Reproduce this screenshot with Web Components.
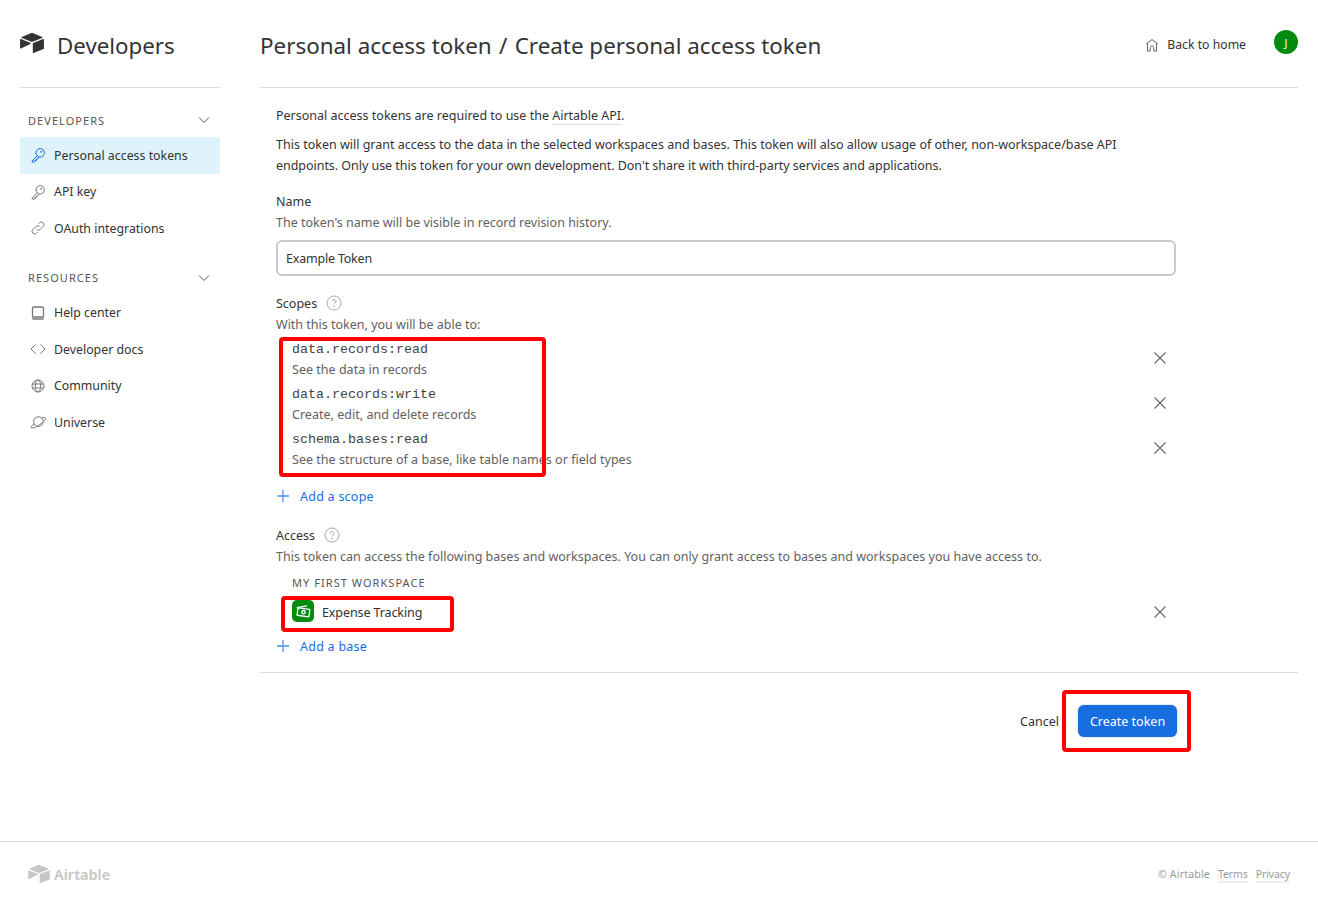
<!DOCTYPE html>
<html lang="en">
<head>
<meta charset="utf-8">
<title>Create personal access token</title>
<style>
  html, body { margin: 0; padding: 0; background: #fff; }
  body { font-family: "Noto Sans", "Open Sans", sans-serif; font-size: 12.5px; color: #333; }
</style>
</head>
<body>
<dev-page>
  <dev-sidebar slot="sidebar"></dev-sidebar>
  <page-header slot="header"></page-header>
  <token-form slot="main"></token-form>
  <site-footer slot="footer"></site-footer>
</dev-page>

<script>
const ICONS = {
  logo: `<path d="M90 12.400 24 39.700c-3.700 1.500-3.600 6.700.1 8.200l66.200 26.200a24.600 24.600 0 0 0 18.100 0l66.300-26.200c3.700-1.500 3.700-6.700.1-8.200L108.800 12.400a24.600 24.600 0 0 0-18.800 0"/><path d="M105.300 88.500v65.600c0 3.100 3.100 5.300 6 4.100l73.900-28.600a4.400 4.400 0 0 0 2.800-4.100V59.800c0-3.100-3.200-5.300-6.100-4.100l-73.800 28.600a4.400 4.400 0 0 0-2.800 4.200"/><path d="m88.100 91.800-21.900 10.600-2.300 1.100-46.200 22.200c-2.900 1.400-6.700-.7-6.700-4V60.100c0-1.200.6-2.200 1.400-3a5 5 0 0 1 1.100-.8c1.100-.7 2.700-.9 4-.3l69.200 27.800c3.600 1.400 3.900 6.400.4 8"/>`,
  key: `<circle cx="10.200" cy="5.800" r="4.200"/><path d="M7.300 8.800 2 14v1h2.800v-1.500h1.500V12h1.500l1-1.800"/><circle cx="11.200" cy="4.800" r=".6"/>`,
  link: `<path d="M6.600 9.400a2.500 2.500 0 0 0 3.600 0l3-3a2.500 2.500 0 0 0-3.600-3.600l-1 1"/><path d="M9.400 6.600a2.500 2.500 0 0 0-3.600 0l-3 3a2.500 2.500 0 0 0 3.600 3.600l1-1"/>`,
  book: `<rect x="2.500" y="2" width="11" height="12" rx="1.200" stroke-width="1.300"/><path d="M2.500 11.500h11v2.500h-11z" fill="#999" stroke="#999"/>`,
  code: `<path d="M5.500 3.500 1 8l4.500 4.500M10.500 3.500 15 8l-4.500 4.500"/>`,
  globe: `<circle cx="8" cy="8" r="6"/><ellipse cx="8" cy="8" rx="2.700" ry="6"/><path d="M2.400 6h11.200M2.400 10h11.200"/>`,
  planet: `<circle cx="8.400" cy="7.600" r="4.800"/><path d="M4.600 9.800C2.500 11.300.6 12.800 1 13.700c.6 1 4.800-.3 8.700-3 3.900-2.700 6.300-5.700 5.700-6.800-.4-.6-1.900-.5-3.500 0"/>`,
  home: `<path d="M2 7.200 8 2.500l6 4.700M3.500 6.500v7.500h2.700v-3.300a1.800 1.800 0 0 1 3.600 0V14h2.700V6.500" stroke-linejoin="round"/>`,
  chevron: `<path d="M3 5.500 8 10.500 13 5.500"/>`,
  help: `<circle cx="8" cy="8" r="7"/><path d="M6.200 6.300a1.900 1.900 0 1 1 2.800 1.700c-.7.400-1 .8-1 1.500"/><circle cx="8" cy="11.500" r=".4"/>`,
  plus: `<path d="M8 2v12M2 8h12"/>`,
  close: `<path d="M2.500 2.500 13.500 13.500M13.500 2.500 2.500 13.500"/>`
};

function icon(name, size, color, sw) {
  return `<svg width="${size}" height="${size}" viewBox="0 0 16 16" fill="none" stroke="${color}" stroke-width="${sw || 1}" aria-hidden="true">${ICONS[name]}</svg>`;
}

class DevPage extends HTMLElement {
  constructor() {
    super();
    this.attachShadow({ mode: "open" });
    this.shadowRoot.innerHTML = `
      <style>
        :host { display: flex; flex-direction: column; min-height: 908px; position: relative; }
        .top { display: flex; gap: 40px; padding: 0 20px; flex: 1; }
        .side { width: 200px; flex: none; }
        .content { flex: 1; min-width: 0; }
      </style>
      <div class="top">
        <div class="side"><slot name="sidebar"></slot></div>
        <div class="content">
          <slot name="header"></slot>
          <slot name="main"></slot>
        </div>
      </div>
      <slot name="footer"></slot>
    `;
  }
}

class NavItem extends HTMLElement {
  constructor() {
    super();
    this.attachShadow({ mode: "open" });
    const active = this.hasAttribute("active");
    const name = this.getAttribute("icon");
    this.shadowRoot.innerHTML = `
      <style>
        :host { display: flex; align-items: center; height: 36.500px; border-radius: 3px; padding-left: 10px; gap: 8px; white-space: nowrap; color: #333; font-size: 12.350px; }
        :host([active]) { background: #def3fc; }
        .i { width: 16px; height: 16px; display: flex; }
      </style>
      <span class="i">${icon(name, 16, active ? "#166ee1" : "#777")}</span>
      <span><slot></slot></span>
    `;
  }
}

class NavGroup extends HTMLElement {
  constructor() {
    super();
    this.attachShadow({ mode: "open" });
    this.shadowRoot.innerHTML = `
      <style>
        :host { display: block; }
        .head { display: flex; align-items: center; justify-content: space-between; box-sizing: border-box; height: 32px; padding: 0 8px 2px; font-size: 11px; letter-spacing: 1.050px; color: #555; }
        svg { display: block; }
      </style>
      <div class="head"><span>${this.getAttribute("label")}</span>${icon("chevron", 16, "#555")}</div>
      <slot></slot>
    `;
  }
}

class DevSidebar extends HTMLElement {
  constructor() {
    super();
    this.attachShadow({ mode: "open" });
    this.shadowRoot.innerHTML = `
      <style>
        :host { display: block; }
        .brand { display: flex; align-items: center; height: 85px; padding-top: 2px; border-bottom: 1px solid #dcdcdc; gap: 13px; font-size: 22.300px; color: #333; }
        .brand span { margin-top: 2px; }
        svg.logo { fill: #333; display: block; margin-top: -3px; }
        .groups { padding-top: 17px; display: flex; flex-direction: column; gap: 16px; }
      </style>
      <div class="brand">
        <svg class="logo" width="24" height="20" viewBox="11 11 177 148" aria-hidden="true">${ICONS.logo}</svg>
        <span>Developers</span>
      </div>
      <div class="groups">
        <nav-group label="DEVELOPERS">
          <nav-item icon="key" active>Personal access tokens</nav-item>
          <nav-item icon="key">API key</nav-item>
          <nav-item icon="link">OAuth integrations</nav-item>
        </nav-group>
        <nav-group label="RESOURCES">
          <nav-item icon="book">Help center</nav-item>
          <nav-item icon="code">Developer docs</nav-item>
          <nav-item icon="globe">Community</nav-item>
          <nav-item icon="planet">Universe</nav-item>
        </nav-group>
      </div>
    `;
  }
}

class PageHeader extends HTMLElement {
  constructor() {
    super();
    this.attachShadow({ mode: "open" });
    this.shadowRoot.innerHTML = `
      <style>
        :host { display: flex; align-items: center; height: 85px; padding-top: 2px; border-bottom: 1px solid #dcdcdc; }
        h1 { flex: 1; margin: 2px 0 0; font-size: 22.400px; font-weight: 400; color: #333; }
        h1 span { padding: 0 1.500px; }
        .back { display: flex; align-items: center; gap: 7.500px; margin-right: 28px; color: #333; font-size: 12.250px; }
        .avatar { width: 24px; height: 24px; border-radius: 50%; background: #048a0e; color: #fff; font-size: 11px; display: flex; align-items: center; justify-content: center; margin-top: -5px; }
        svg { display: block; }
      </style>
      <h1>Personal access token <span>/</span> Create personal access token</h1>
      <span class="back">${icon("home", 16, "#666")}<span>Back to home</span></span>
      <span class="avatar">J</span>
    `;
  }
}

class ScopeRow extends HTMLElement {
  constructor() {
    super();
    this.attachShadow({ mode: "open" });
    this.shadowRoot.innerHTML = `
      <style>
        :host { display: flex; align-items: center; justify-content: space-between; height: 45px; padding-left: 16px; padding-right: 8px; }
        .t { align-self: flex-start; padding-top: 4px; }
        code { display: block; font-family: "Liberation Mono", monospace; font-size: 13.330px; line-height: 20px; color: #444; }
        .desc { display: block; line-height: 20px; color: #616161; letter-spacing: .02px; }
        svg { display: block; margin-top: -1px; }
      </style>
      <div class="t"><code>${this.getAttribute("name")}</code><span class="desc"><slot></slot></span></div>
      ${icon("close", 16, "#666", 1.100)}
    `;
  }
}

class AddLink extends HTMLElement {
  constructor() {
    super();
    this.attachShadow({ mode: "open" });
    this.shadowRoot.innerHTML = `
      <style>
        :host { display: flex; align-items: center; gap: 9px; color: #166ee1; height: 20px; letter-spacing: .25px; }
        svg { display: block; margin-left: -1px; }
      </style>
      ${icon("plus", 16, "#4f92e8", 1.300)}<span><slot></slot></span>
    `;
  }
}

class HighlightBox extends HTMLElement {
  constructor() {
    super();
    this.attachShadow({ mode: "open" });
    this.shadowRoot.innerHTML = `
      <style>
        :host { display: block; position: absolute; box-sizing: border-box; border: 4px solid #fe0000; border-radius: 4px; pointer-events: none; }
      </style>
    `;
  }
}

class TokenForm extends HTMLElement {
  constructor() {
    super();
    this.attachShadow({ mode: "open" });
    this.shadowRoot.innerHTML = `
      <style>
        :host { display: block; position: relative; }
        .body { padding: 17px 16px 16px; border-bottom: 1px solid #dcdcdc; }
        p { margin: 0; line-height: 21px; color: #333; }
        .intro2 { margin-top: 8px; width: 880px; }
        .tight { letter-spacing: -.04px; }
        a.u { color: inherit; text-decoration: none; border-bottom: 1px solid #dcdcdc; }
        .label { display: flex; align-items: center; gap: 9px; line-height: 20px; color: #333; }
        .label svg { margin-top: -2px; }
        .hint { line-height: 20px; color: #616161; margin-top: 1px; }
        .name { margin-top: 16px; }
        .input { box-sizing: border-box; width: 900px; height: 36px; margin-top: 7px; border: 2px solid #c9c9c9; border-radius: 6px; padding: 0 8px; display: flex; align-items: center; color: #333; letter-spacing: -.2px; }
        .scopes { margin-top: 18px; }
        .list { margin-top: 1px; width: 900px; }
        .add { margin-top: 15px; }
        .access { margin-top: 20px; }
        .wide { letter-spacing: .015px; }
        .ws { margin: 6px 0 1px 16px; font-size: 11px; letter-spacing: 1.050px; color: #555; line-height: 20px; }
        .base { display: flex; align-items: center; justify-content: space-between; width: 900px; box-sizing: border-box; height: 36px; padding: 0 8px 0 16px; }
        .base .l { display: flex; align-items: center; gap: 8px; letter-spacing: -.1px; }
        .base > svg { margin-top: -1px; }
        .app { width: 22px; height: 22px; border-radius: 5px; background: #048a0e; display: flex; align-items: center; justify-content: center; margin-top: -2px; }
        .addbase { margin-top: 6px; }
        .foot { display: flex; align-items: center; justify-content: flex-end; gap: 19px; height: 96px; padding-right: 121px; }
        .btn { height: 32px; width: 99px; border-radius: 6px; background: #166ee1; color: #fff; display: flex; align-items: center; justify-content: center; box-shadow: 0 0 2px rgba(0,0,0,.3); }
        svg { display: block; }
        highlight-box.a { left: 19px; top: 249px; width: 267px; height: 140px; }
        highlight-box.b { left: 21px; top: 508px; width: 173px; height: 36px; }
        highlight-box.c { left: 802px; top: 602px; width: 129px; height: 62px; }
      </style>
      <div class="body">
        <p>Personal access tokens are required to use the <a class="u">Airtable API</a>.</p>
        <p class="intro2">This token will grant access to the data in the selected workspaces and bases. This token will also allow usage of other, non-workspace/base API <span class="tight">endpoints. Only use this token for your own development. Don't share it with third-party services and applications.</span></p>

        <div class="name label">Name</div>
        <div class="hint">The token's name will be visible in record revision history.</div>
        <div class="input">Example Token</div>

        <div class="scopes label">Scopes ${icon("help", 16, "#a6a6a6")}</div>
        <div class="hint">With this token, you will be able to:</div>
        <div class="list">
          <scope-row name="data.records:read">See the data in records</scope-row>
          <scope-row name="data.records:write">Create, edit, and delete records</scope-row>
          <scope-row name="schema.bases:read">See the structure of a base, like table names or field types</scope-row>
        </div>
        <add-link class="add">Add a scope</add-link>

        <div class="access label">Access ${icon("help", 16, "#a6a6a6")}</div>
        <div class="hint wide">This token can access the following bases and workspaces. You can only grant access to bases and workspaces you have access to.</div>
        <div class="ws">MY FIRST WORKSPACE</div>
        <div class="base">
          <span class="l">
            <span class="app"><svg width="18" height="18" viewBox="0 0 18 18" fill="none" stroke="#fff" stroke-width="1.300"><rect x="3.500" y="6.500" width="12" height="7.500" rx=".5" transform="rotate(8 9 10)"/><path d="M2.800 5.600 13 3.800"/><circle cx="9.500" cy="10.200" r="1.700"/></svg></span>
            <span>Expense Tracking</span>
          </span>
          ${icon("close", 16, "#666", 1.100)}
        </div>
        <add-link class="addbase">Add a base</add-link>
      </div>
      <div class="foot">
        <span>Cancel</span>
        <span class="btn">Create token</span>
      </div>
      <highlight-box class="a"></highlight-box>
      <highlight-box class="b"></highlight-box>
      <highlight-box class="c"></highlight-box>
    `;
  }
}

class SiteFooter extends HTMLElement {
  constructor() {
    super();
    this.attachShadow({ mode: "open" });
    this.shadowRoot.innerHTML = `
      <style>
        :host { display: flex; align-items: center; justify-content: space-between; height: 66px; border-top: 1px solid #dcdcdc; padding: 0 28px; color: #999; font-size: 10.500px; }
        .brand { display: flex; align-items: center; gap: 4px; font-size: 14.500px; font-weight: 600; color: #c6c6c6; margin-top: -2px; }
        .brand svg { fill: #c6c6c6; display: block; }
        .links { display: flex; gap: 8px; }
        .links span { letter-spacing: .2px; }
        .links a { border-bottom: 2px solid #eee; letter-spacing: -.1px; }
      </style>
      <span class="brand"><svg width="22" height="18" viewBox="11 11 177 148" aria-hidden="true">${ICONS.logo}</svg><span>Airtable</span></span>
      <span class="links"><span>© Airtable</span><a>Terms</a><a>Privacy</a></span>
    `;
  }
}

customElements.define("highlight-box", HighlightBox);
customElements.define("nav-item", NavItem);
customElements.define("nav-group", NavGroup);
customElements.define("dev-sidebar", DevSidebar);
customElements.define("page-header", PageHeader);
customElements.define("scope-row", ScopeRow);
customElements.define("add-link", AddLink);
customElements.define("token-form", TokenForm);
customElements.define("site-footer", SiteFooter);
customElements.define("dev-page", DevPage);
</script>
</body>
</html>
